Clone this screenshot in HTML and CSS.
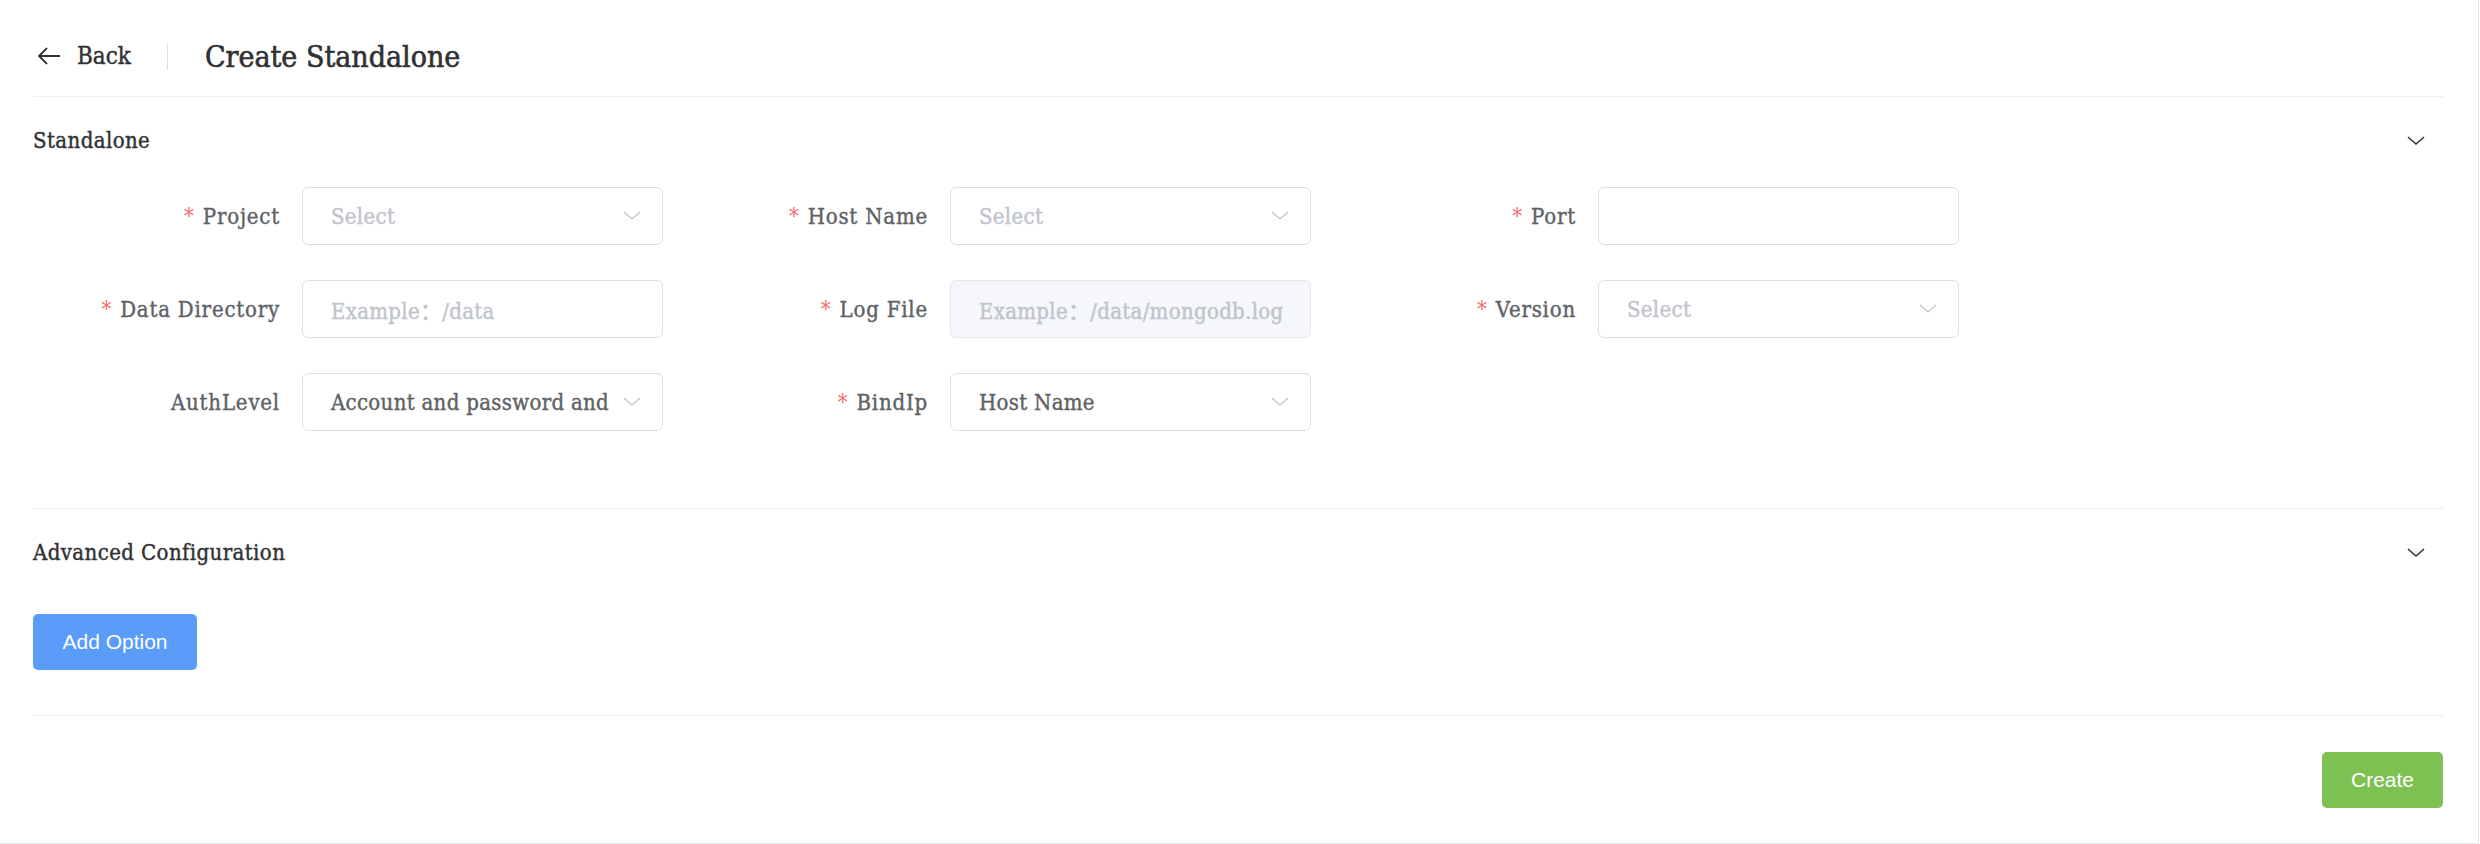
FILE: index.html
```html
<!DOCTYPE html>
<html lang="en">
<head>
<meta charset="utf-8">
<title>Create Standalone</title>
<link rel="stylesheet" href="styles.css">
</head>
<body>
<div class="page">
  <header class="topbar">
    <a class="back" href="#">
      <svg class="back-icon" viewBox="0 0 24 18" width="24" height="18"><path d="M23 9H2M10 1L2 9l8 8" fill="none" stroke="#303133" stroke-width="1.8"/></svg>
      <span>Back</span>
    </a>
    <span class="vdivider"></span>
    <h1 class="title">Create Standalone</h1>
  </header>

  <section class="collapse">
    <div class="collapse-head">
      <span>Standalone</span>
      <svg class="head-chevron" viewBox="0 0 18 9" width="18" height="9"><path d="M1 1l8 7 8-7" fill="none" stroke="#303133" stroke-width="1.5"/></svg>
    </div>
    <div class="collapse-body form-body">
      <div class="form-grid">
        <div class="form-item">
          <label class="form-label req">Project</label>
          <div class="input select"><span class="ph">Select</span><svg class="sel-chevron" viewBox="0 0 18 9" width="18" height="9"><path d="M1 1l8 7 8-7" fill="none" stroke="#c0c4cc" stroke-width="1.3"/></svg></div>
        </div>
        <div class="form-item">
          <label class="form-label req">Host Name</label>
          <div class="input select"><span class="ph">Select</span><svg class="sel-chevron" viewBox="0 0 18 9" width="18" height="9"><path d="M1 1l8 7 8-7" fill="none" stroke="#c0c4cc" stroke-width="1.3"/></svg></div>
        </div>
        <div class="form-item">
          <label class="form-label req">Port</label>
          <div class="input"></div>
        </div>

        <div class="form-item">
          <label class="form-label req">Data Directory</label>
          <div class="input"><span class="ph">Example：/data</span></div>
        </div>
        <div class="form-item">
          <label class="form-label req">Log File</label>
          <div class="input disabled"><span class="ph">Example：/data/mongodb.log</span></div>
        </div>
        <div class="form-item">
          <label class="form-label req">Version</label>
          <div class="input select"><span class="ph">Select</span><svg class="sel-chevron" viewBox="0 0 18 9" width="18" height="9"><path d="M1 1l8 7 8-7" fill="none" stroke="#c0c4cc" stroke-width="1.3"/></svg></div>
        </div>

        <div class="form-item">
          <label class="form-label">AuthLevel</label>
          <div class="input select"><span class="val">Account and password and</span><svg class="sel-chevron" viewBox="0 0 18 9" width="18" height="9"><path d="M1 1l8 7 8-7" fill="none" stroke="#c0c4cc" stroke-width="1.3"/></svg></div>
        </div>
        <div class="form-item">
          <label class="form-label req">BindIp</label>
          <div class="input select"><span class="val">Host Name</span><svg class="sel-chevron" viewBox="0 0 18 9" width="18" height="9"><path d="M1 1l8 7 8-7" fill="none" stroke="#c0c4cc" stroke-width="1.3"/></svg></div>
        </div>
      </div>
    </div>
  </section>

  <section class="collapse">
    <div class="collapse-head">
      <span>Advanced Configuration</span>
      <svg class="head-chevron" viewBox="0 0 18 9" width="18" height="9"><path d="M1 1l8 7 8-7" fill="none" stroke="#303133" stroke-width="1.5"/></svg>
    </div>
    <div class="collapse-body adv-body">
      <button class="btn btn-primary" type="button">Add Option</button>
    </div>
  </section>

  <footer class="footer">
    <button class="btn btn-success" type="button">Create</button>
  </footer>
</div>
</body>
</html>
```

FILE: styles.css
```css
html, body {
  margin: 0;
  padding: 0;
  background: #ffffff;
}

body {
  font-family: "DejaVu Serif", "Liberation Serif", "Noto Sans CJK SC", serif;
  font-stretch: condensed;
  color: #303133;
  -webkit-text-stroke: 0.4px currentColor;
}

.page {
  box-sizing: border-box;
  width: 2479px;
  height: 844px;
  padding: 0 35px 0 33px;
  border-right: 1px solid #e4e7ed;
  border-bottom: 1px solid #e4e7ed;
  display: flex;
  flex-direction: column;
}

/* top bar */
.topbar {
  box-sizing: border-box;
  height: 97px;
  padding-top: 16px;
  border-bottom: 1px solid #ebeef5;
  display: flex;
  align-items: center;
}

.back {
  display: flex;
  align-items: center;
  gap: 16px;
  margin-left: 4px;
  color: #303133;
  text-decoration: none;
  font-size: 24px;
}

.back-icon {
  display: block;
}

.vdivider {
  width: 1px;
  height: 27px;
  background: #dcdfe6;
  margin: 0 37px 0 36px;
}

.title {
  margin: 0;
  font-size: 30px;
  font-weight: normal;
  color: #303133;
  -webkit-text-stroke: 0.6px currentColor;
}

/* collapse sections */
.collapse {
  border-bottom: 1px solid #ebeef5;
}

.collapse-head {
  height: 86px;
  display: flex;
  align-items: center;
  justify-content: space-between;
  font-size: 22px;
  letter-spacing: 0.4px;
  color: #303133;
}

.head-chevron {
  display: block;
  margin-right: 18px;
}

.form-body {
  padding: 4px 0 77px;
}

.form-grid {
  display: grid;
  grid-template-columns: repeat(3, 648px);
  row-gap: 35px;
}

.form-item {
  display: flex;
  align-items: center;
  height: 58px;
}

.form-label {
  box-sizing: border-box;
  width: 269px;
  padding-right: 22px;
  text-align: right;
  font-size: 22px;
  letter-spacing: 0.8px;
  color: #606266;
}

.form-label.req::before {
  content: "*";
  color: #f56c6c;
  -webkit-text-stroke: 0;
  margin-right: 8px;
}

.input {
  position: relative;
  box-sizing: border-box;
  width: 361px;
  height: 58px;
  border: 1px solid #dcdfe6;
  border-radius: 6px;
  padding: 0 28px;
  display: flex;
  align-items: center;
  font-size: 22px;
  letter-spacing: 0.3px;
  background: #fff;
}

.input.disabled {
  background: #f5f7fa;
  border-color: #e4e7ed;
}

.ph {
  color: #c0c4cc;
  white-space: nowrap;
}

.val {
  color: #606266;
  white-space: nowrap;
}

.sel-chevron {
  position: absolute;
  right: 21px;
  top: 23px;
}

.adv-body {
  padding: 19px 0 45px;
}

.btn {
  box-sizing: border-box;
  height: 56px;
  border: none;
  border-radius: 5px;
  font-family: "Liberation Sans", Arial, sans-serif;
  font-stretch: normal;
  font-size: 21px;
  color: #ffffff;
  -webkit-text-stroke: 0;
  padding: 0;
}

.btn-primary {
  width: 164px;
  background: #5a9cf8;
}

.btn-success {
  width: 121px;
  background: #7dc152;
}

.footer {
  display: flex;
  justify-content: flex-end;
  padding-top: 36px;
}
```
